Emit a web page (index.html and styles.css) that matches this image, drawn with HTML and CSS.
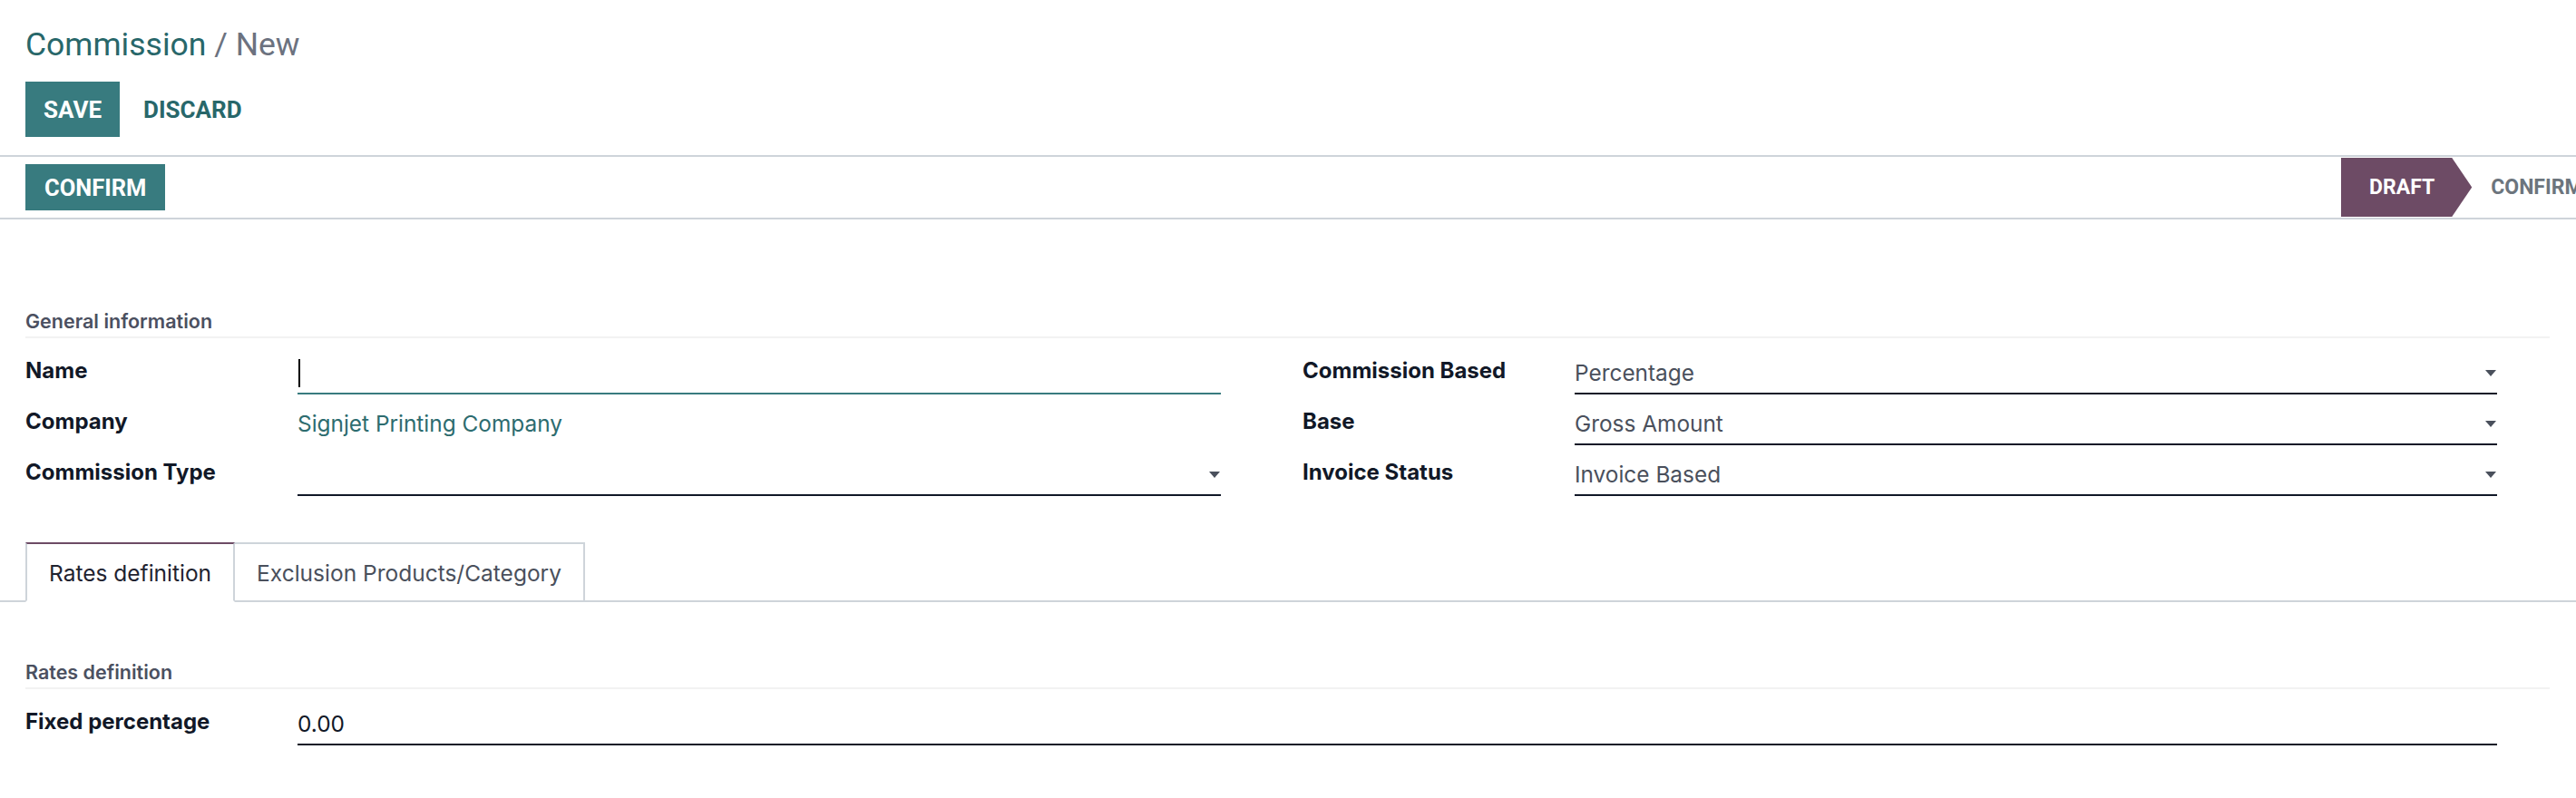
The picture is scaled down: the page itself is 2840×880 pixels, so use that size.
FILE: index.html
```html
<!DOCTYPE html>
<html lang="en">
<head>
<meta charset="utf-8">
<title>Commission / New</title>
<link rel="stylesheet" href="styles.css">
</head>
<body>
<div class="control-panel">
  <h1 class="breadcrumb"><span class="crumb-link">Commission</span><span class="crumb-sep"> / </span><span class="crumb-current">New</span></h1>
  <div class="cp-buttons">
    <button class="btn btn-primary btn-save">SAVE</button>
    <button class="btn btn-link">DISCARD</button>
  </div>
</div>
<div class="statusbar">
  <div class="statusbar-buttons">
    <button class="btn btn-primary btn-confirm">CONFIRM</button>
  </div>
  <div class="status-list">
    <div class="status-step current">DRAFT</div>
    <div class="status-step">CONFIRMED</div>
  </div>
</div>
<main class="sheet">
  <div class="sheet-body">
    <div class="section-title">General information</div>
    <div class="groups">
      <div class="group group-left">
        <label class="field-label">Name</label>
        <div class="field field-input focused"><span class="caret"></span></div>
        <label class="field-label">Company</label>
        <div class="field field-link">Signjet Printing Company</div>
        <label class="field-label">Commission Type</label>
        <div class="field field-input field-select"><span class="select-value"></span><span class="select-arrow"></span></div>
      </div>
      <div class="group group-right">
        <label class="field-label">Commission Based</label>
        <div class="field field-input field-select"><span class="select-value">Percentage</span><span class="select-arrow"></span></div>
        <label class="field-label">Base</label>
        <div class="field field-input field-select"><span class="select-value">Gross Amount</span><span class="select-arrow"></span></div>
        <label class="field-label">Invoice Status</label>
        <div class="field field-input field-select"><span class="select-value">Invoice Based</span><span class="select-arrow"></span></div>
      </div>
    </div>
  </div>
  <div class="tabs">
    <div class="tab active">Rates definition</div>
    <div class="tab">Exclusion Products/Category</div>
  </div>
  <div class="sheet-body tab-pane">
    <div class="section-title">Rates definition</div>
    <div class="group group-full">
      <label class="field-label">Fixed percentage</label>
      <div class="field field-input field-number">0.00</div>
    </div>
  </div>
</main>
</body>
</html>
```

FILE: styles.css
```css
html, body {
  margin: 0;
  padding: 0;
  background: #ffffff;
}
body {
  width: 2840px;
  height: 880px;
  overflow: hidden;
  font-family: "Inter", "Noto Sans", sans-serif;
  color: #111827;
}
.btn {
  border: none;
  margin: 0;
  font-family: "Roboto", "Liberation Sans", sans-serif;
  font-weight: 700;
  cursor: pointer;
  background: transparent;
}
.btn-primary {
  background: #387b7f;
  color: #ffffff;
}
.btn-link {
  color: #28676a;
}

/* control panel */
.control-panel {
  padding: 28px 28px 20px;
  border-bottom: 2px solid #ced4da;
}
.breadcrumb {
  margin: 0 0 20px;
  font-family: "Roboto", "Liberation Sans", sans-serif;
  font-weight: 400;
  font-size: 35.5px;
  line-height: 42px;
}
.crumb-link { color: #28676a; }
.crumb-sep, .crumb-current { color: #6c727f; }
.cp-buttons {
  display: flex;
  align-items: center;
  gap: 6px;
}
.btn-save, .cp-buttons .btn-link {
  height: 61px;
  padding: 0 20px;
  font-size: 26px;
}

/* statusbar */
.statusbar {
  display: grid;
  grid-template-columns: 1fr 259px;
  height: 67px;
  padding-left: 28px;
  border-bottom: 2px solid #ced4da;
}
.statusbar-buttons {
  display: flex;
  align-items: center;
}
.btn-confirm {
  height: 51px;
  padding: 0 21px;
  font-size: 25.5px;
}
.status-list {
  display: flex;
  padding: 1px 0;
  overflow: hidden;
}
.status-step {
  display: flex;
  align-items: center;
  flex: none;
  white-space: nowrap;
  font-family: "Roboto", "Liberation Sans", sans-serif;
  font-weight: 700;
  font-size: 23px;
  color: #6c757d;
  padding-left: 21px;
}
.status-step.current {
  background: #6d4b65;
  color: #ffffff;
  padding: 0 41px 0 31px;
  clip-path: polygon(0 0, calc(100% - 22px) 0, 100% 50%, calc(100% - 22px) 100%, 0 100%);
}

/* sheet */
.sheet-body {
  padding: 0 29px 0 28px;
}
.section-title {
  margin-top: 96px;
  padding-bottom: 1px;
  border-bottom: 2px solid #f2f2f2;
  font-size: 21.5px;
  font-weight: 600;
  line-height: 32px;
  color: #4b5060;
}
.groups {
  display: grid;
  grid-template-columns: 1408px 1fr;
  margin-top: 21px;
}
.group {
  display: grid;
  grid-template-columns: 300px 1fr;
  row-gap: 15px;
  align-items: start;
}
.group-left { padding-right: 90px; }
.group-right { padding-right: 58px; }
.group-full {
  margin-top: 21px;
  padding-right: 58px;
}
.field-label {
  font-size: 24px;
  font-weight: 700;
  line-height: 30px;
  color: #111827;
}
.field {
  display: flex;
  align-items: center;
  justify-content: space-between;
  height: 30px;
  padding: 2px 0 7px;
  border-bottom: 2px solid transparent;
  font-size: 24.4px;
  line-height: 30px;
}
.field-input {
  border-bottom-color: #111827;
}
.field-input.focused {
  border-bottom-color: #387b7f;
  justify-content: flex-start;
}
.caret {
  display: inline-block;
  width: 2px;
  height: 31px;
  margin-left: 1px;
  background: #000000;
}
.field-link {
  justify-content: flex-start;
  color: #2d6c6f;
}
.select-value {
  color: #4a505c;
}
.select-arrow {
  width: 0;
  height: 0;
  margin-right: 1px;
  border-left: 6px solid transparent;
  border-right: 6px solid transparent;
  border-top: 7px solid #4a505c;
}
.field-number {
  justify-content: flex-start;
  color: #111827;
}

/* tabs */
.tabs {
  display: flex;
  margin-top: 51px;
  padding-left: 28px;
  border-bottom: 2px solid #ced4da;
}
.tab {
  margin-bottom: -2px;
  padding: 17px 24px 15px;
  border: 2px solid #ced4da;
  background: #ffffff;
  font-size: 24.5px;
  line-height: 30px;
  color: #4a505c;
}
.tab + .tab {
  margin-left: -2px;
}
.tab.active {
  position: relative;
  z-index: 1;
  border-top-color: #6d4b65;
  border-bottom-color: #ffffff;
  color: #1f2330;
}
.tab-pane .section-title {
  margin-top: 61px;
}
```
